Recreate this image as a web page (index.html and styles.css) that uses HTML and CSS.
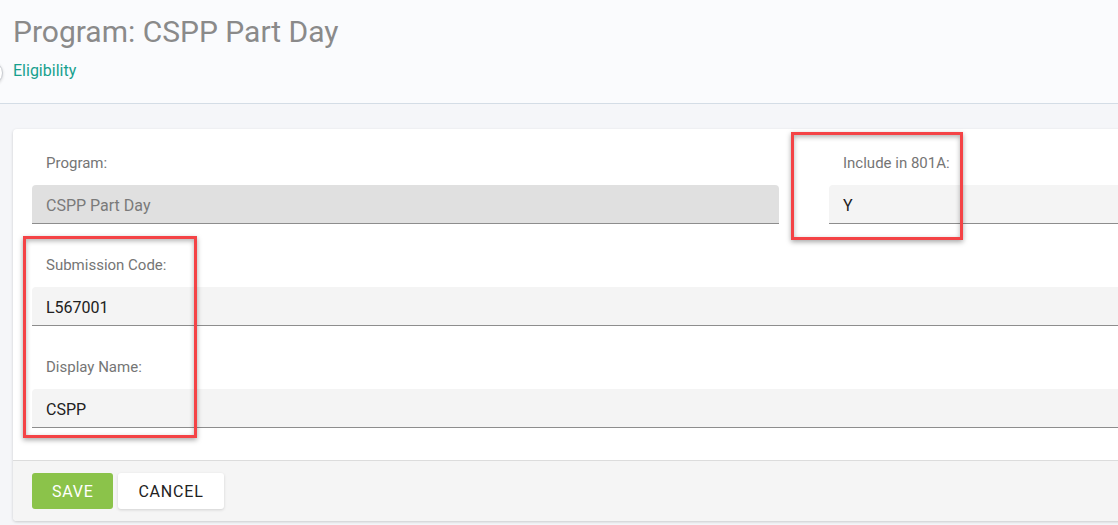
FILE: index.html
```html
<!DOCTYPE html>
<html lang="en">
<head>
<meta charset="utf-8">
<title>Program: CSPP Part Day</title>
<link rel="stylesheet" href="styles.css">
</head>
<body>
<div class="page">
  <header class="page-header">
    <span class="side-toggle"></span>
    <h1 class="title">Program: CSPP Part Day</h1>
    <a class="crumb" href="#">Eligibility</a>
  </header>
  <main class="content">
    <section class="card">
      <div class="card-body">
        <div class="row-two">
          <div class="field">
            <label class="field-label">Program:</label>
            <div class="field-input disabled">CSPP Part Day</div>
          </div>
          <div class="field">
            <label class="field-label">Include in 801A:</label>
            <div class="field-input">Y</div>
          </div>
        </div>
        <div class="field">
          <label class="field-label">Submission Code:</label>
          <div class="field-input">L567001</div>
        </div>
        <div class="field">
          <label class="field-label">Display Name:</label>
          <div class="field-input">CSPP</div>
        </div>
      </div>
      <div class="card-footer">
        <button class="btn btn-save">SAVE</button>
        <button class="btn btn-cancel">CANCEL</button>
      </div>
    </section>
  </main>
  <div class="highlight highlight-a"></div>
  <div class="highlight highlight-b"></div>
</div>
</body>
</html>
```

FILE: styles.css
```css
* { box-sizing: border-box; }
html, body {
  margin: 0;
  padding: 0;
  background: #f5f6f9;
  font-family: Roboto, "Liberation Sans", Arial, sans-serif;
  overflow: hidden;
}
.page {
  position: relative;
  width: 1118px;
  height: 525px;
  overflow: hidden;
}
.page-header {
  position: relative;
  background: #fafbfd;
  border-bottom: 1px solid #d4dde6;
  height: 104px;
  padding: 14px 13px 0;
}
.side-toggle {
  position: absolute;
  left: -21px;
  top: 61px;
  width: 24px;
  height: 24px;
  border-radius: 50%;
  background: #fff;
  border: 1px solid #c9ccd2;
  box-shadow: 0 1px 3px rgba(0,0,0,.15);
}
.title {
  margin: 0;
  font-size: 30px;
  line-height: 36px;
  font-weight: 400;
  color: #8a8a8a;
}
.crumb {
  display: block;
  margin-top: 11px;
  font-size: 16px;
  line-height: 20px;
  color: #17a08e;
  text-decoration: none;
}
.content {
  padding: 25px 0 0 13px;
}
.card {
  width: 1582px;
  background: #fff;
  border-radius: 4px;
  box-shadow: 0 1px 3px rgba(0,0,0,.18);
  overflow: hidden;
}
.card-body {
  padding: 24px 19px 32px;
  display: flex;
  flex-direction: column;
  gap: 31px;
}
.row-two {
  display: grid;
  grid-template-columns: 1fr 1fr;
  column-gap: 50px;
}
.field {
  display: flex;
  flex-direction: column;
}
.field-label {
  font-size: 15px;
  line-height: 20px;
  color: #757575;
  padding-left: 14px;
  margin-bottom: 12px;
}
.field-input {
  height: 39px;
  background: #f4f4f4;
  border-bottom: 1px solid #8d8d8d;
  border-radius: 4px 4px 0 0;
  padding: 11px 14px 0;
  font-size: 16px;
  line-height: 20px;
  color: #212121;
}
.field-input.disabled {
  background: #e0e0e0;
  color: #7a7a7a;
}
.card-footer {
  background: #f5f5f5;
  border-top: 1px solid #dcdcdc;
  padding: 12px 19px;
  display: flex;
  gap: 5px;
}
.btn {
  height: 36px;
  border: none;
  border-radius: 3px;
  padding: 0 20px;
  font-family: Roboto, "Liberation Sans", Arial, sans-serif;
  font-size: 16px;
  letter-spacing: 0.8px;
  cursor: pointer;
}
.btn-save {
  width: 81px;
  background: #8bc34a;
  color: #fff;
}
.btn-cancel {
  width: 106px;
  background: #fff;
  color: #222;
  box-shadow: 0 1px 3px rgba(0,0,0,.15);
}
.highlight {
  position: absolute;
  border: 3px solid #f44346;
  box-shadow: 0 2px 5px rgba(0,0,0,.35), inset 0 2px 5px rgba(0,0,0,.3);
  pointer-events: none;
}
.highlight-a {
  left: 791px;
  top: 132px;
  width: 172px;
  height: 108px;
}
.highlight-b {
  left: 23px;
  top: 236px;
  width: 174px;
  height: 202px;
}
```
